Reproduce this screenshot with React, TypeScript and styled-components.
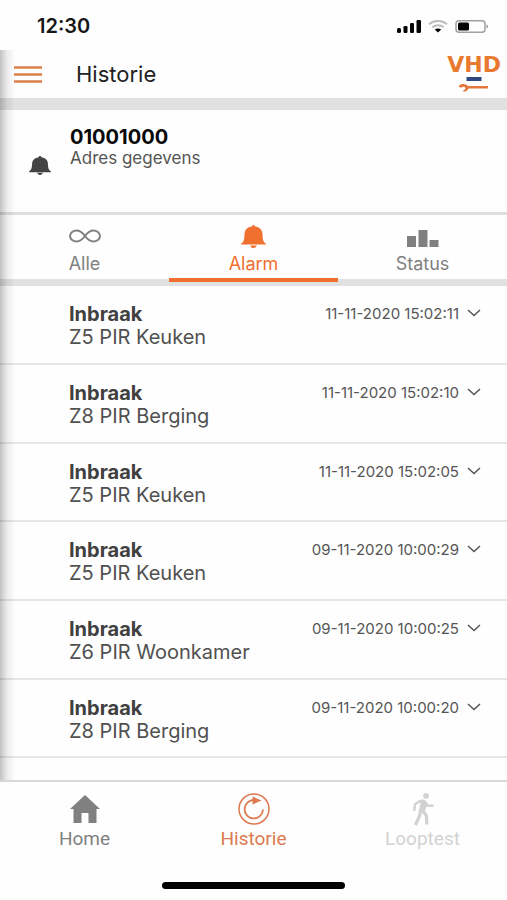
import React from "react";
import styled, { createGlobalStyle } from "styled-components";

const ORANGE = "#f07030";

const GlobalStyle = createGlobalStyle`
  * { box-sizing: border-box; }
  body { margin: 0; background: #fefefe; font-family: Inter, "Liberation Sans", sans-serif; color: #444; }
  button { font: inherit; color: inherit; background: none; border: 0; padding: 0; cursor: pointer; }
  svg { display: block; }
`;

const Screen = styled.div`
  display: flex;
  flex-direction: column;
  height: 100vh;
  overflow: hidden;
`;

const StatusBar = styled.div`
  display: flex;
  flex: none;
  align-items: center;
  justify-content: space-between;
  height: 50px;
  padding: 2px 18px 0 37px;
`;

const Clock = styled.span`
  font-size: 20px;
  line-height: 24px;
  font-weight: 600;
  color: #161616;
`;

const Indicators = styled.div`
  display: flex;
  align-items: center;
  gap: 7px;
`;

const Page = styled.div`
  position: relative;
  display: flex;
  flex-direction: column;
  flex: 1;
  min-height: 0;
`;

const EdgeShadow = styled.div`
  position: absolute;
  inset: 0 auto 0 0;
  width: 15px;
  background: linear-gradient(to right, rgba(0, 0, 0, 0.24), rgba(0, 0, 0, 0.08) 45%, transparent);
  pointer-events: none;
`;

const Header = styled.header`
  display: flex;
  flex: none;
  align-items: center;
  height: 60px;
  padding: 0 6px 0 14px;
  border-bottom: 12px solid #e1e1e1;
`;

const MenuButton = styled.button`
  width: 62px;
`;

const Title = styled.h1`
  flex: 1;
  margin: 0;
  font-size: 22px;
  line-height: 24px;
  font-weight: 400;
  color: #222;
`;

const Account = styled.section`
  display: flex;
  flex: none;
  height: 105px;
  padding: 16px 16px 0 29px;
  border-bottom: 3px solid #dedede;
`;

const AccountIcon = styled.div`
  width: 41px;
  padding-top: 30px;
`;

const AccountNumber = styled.h2`
  margin: 0;
  font-size: 20px;
  line-height: 22px;
  font-weight: 700;
  color: #080808;
`;

const Address = styled.p`
  margin: 0;
  font-size: 17px;
  line-height: 20px;
  color: #555;
`;

const Tabs = styled.div`
  display: grid;
  flex: none;
  grid-template-columns: repeat(3, 1fr);
  height: 71px;
  background: linear-gradient(#e1e1e1, #e1e1e1) bottom / 100% 7px no-repeat;
`;

const Tab = styled.button<{ $active?: boolean }>`
  display: flex;
  flex-direction: column;
  align-items: center;
  gap: 5px;
  padding-top: 8px;
  font-size: 18px;
  line-height: 20px;
  color: ${(p) => (p.$active ? ORANGE : "#808080")};
  background: ${(p) => (p.$active ? `linear-gradient(${ORANGE}, ${ORANGE}) 0 63px / 100% 4px no-repeat` : "none")};
`;

const TabIcon = styled.span`
  display: flex;
  align-items: center;
  height: 26px;
`;

const Events = styled.ul`
  flex: 1;
  min-height: 0;
  margin: 0;
  padding: 0;
  overflow: hidden;
  list-style: none;
`;

const EventRow = styled.li`
  display: flex;
  justify-content: space-between;
  height: 79px;
  padding: 17px 26px 0 69px;
  border-bottom: 2px solid #e6e6e6;

  &:nth-child(3n) { height: 78px; }
`;

const EventName = styled.h3`
  margin: 0;
  font-size: 20px;
  line-height: 22px;
  font-weight: 700;
  color: #404040;
`;

const Zone = styled.p`
  margin: 0;
  font-size: 20px;
  line-height: 24px;
  color: #505050;
`;

const Expand = styled.button`
  display: flex;
  align-items: center;
  gap: 8px;
  height: 20px;
  font-size: 15px;
  color: #555;
`;

const BottomNav = styled.nav`
  display: grid;
  flex: none;
  grid-template-columns: repeat(3, 1fr);
  height: 94px;
  border-top: 2px solid #d8d8d8;
`;

const NavItem = styled.button<{ $color: string }>`
  display: flex;
  flex-direction: column;
  align-items: center;
  align-self: start;
  gap: 1px;
  padding-top: 10px;
  font-family: Roboto, "Liberation Sans", sans-serif;
  font-size: 19px;
  line-height: 24px;
  color: ${(p) => p.$color};
`;

const HomeArea = styled.div`
  display: flex;
  flex: none;
  justify-content: center;
  height: 26px;
  padding-top: 8px;
`;

const HomeIndicator = styled.div`
  width: 36%;
  height: 7px;
  border-radius: 4px;
  background: #000;
`;

const Bell = ({ width, height }: { width: number; height: number }) => (
  <svg width={width} height={height} viewBox="0 0 24 22" preserveAspectRatio="none" fill="currentColor" aria-hidden="true">
    <path d="M10.500 1.500a1.500 1.500 0 0 1 3 0c4.300.5 6.800 3 7.100 7 .2 4.600.4 7.800 3.400 9.400v.8H0v-.8c3-1.600 3.200-4.800 3.400-9.400.3-4 2.800-6.500 7.100-7zM9 19.500h6c-.3 1.600-1.400 2.500-3 2.500s-2.700-.9-3-2.500z" />
  </svg>
);

const SignalIcons = () => (
  <Indicators>
    <svg width="24" height="13" viewBox="0 0 24 13" fill="#050505" aria-hidden="true">
      <rect x="0" y="8" width="4" height="5" rx="1.500" />
      <rect x="6.500" y="6" width="4" height="7" rx="1.200" />
      <rect x="13" y="3" width="4" height="10" rx="1.200" />
      <rect x="19.500" y="0" width="4.500" height="13" rx="1.200" />
    </svg>
    <svg width="20" height="13" viewBox="0 0 20 13" fill="none" aria-hidden="true">
      <path d="M1 4.200c5-4.200 13-4.200 18 0M4.300 7.300c3.200-2.700 8.200-2.700 11.400 0" stroke="#bdbdbd" strokeWidth="2" />
      <path d="M6.800 9.500c1.800-1.300 4.600-1.300 6.400 0L10 12.500z" fill="#050505" />
    </svg>
    <svg width="34" height="13" viewBox="0 0 34 13" aria-hidden="true">
      <rect x="1" y=".75" width="29" height="11.500" rx="3" fill="none" stroke="#a0a0a0" strokeWidth="1.500" />
      <rect x="3" y="2.500" width="11" height="8" rx="1.500" fill="#050505" />
      <path d="M31.500 4.500c2 .5 2 3.500 0 4z" fill="#999" />
    </svg>
  </Indicators>
);

const LogoLink = styled.a`
  display: flex;
  flex-direction: column;
  align-items: center;
  font-family: "DejaVu Sans", sans-serif;
  font-size: 22px;
  line-height: 20px;
  font-weight: 700;
  color: #e87a30;
  text-decoration: none;
`;

const Logo = () => (
  <LogoLink href="#" aria-label="VHD">
    VHD
    <svg width="30" height="18" viewBox="0 0 30 18" aria-hidden="true">
      <path d="M7.500 2h15v4h-15z" fill="#304880" />
      <path d="M0 10.800C1.800 8.300 7 8.300 9 11h20v2.500H9.500c-.8 2-2.500 3.300-5 3.200l-.3-1.500c1.500-.2 2.300-1 2.200-2.300C6 11.300 3.800 11.300 2.800 12.600L0 12.300z" fill="#e5773d" />
    </svg>
  </LogoLink>
);

const Infinity = () => (
  <svg width="32" height="14" viewBox="0 0 32 14" fill="none" stroke="currentColor" strokeWidth="2" aria-hidden="true">
    <path d="M16 7c-3-4-5.500-5.500-8.500-5.500S1 3.800 1 7s3.500 5.500 6.500 5.500S13 11 16 7s5.500-5.500 8.500-5.500S31 3.800 31 7s-3.500 5.500-6.500 5.500S19 11 16 7z" />
  </svg>
);

const Bars = () => (
  <svg width="32" height="22" viewBox="0 0 32 22" fill="currentColor" aria-hidden="true">
    <path d="M0 11h9v11H0zM11.500 5h9v17h-9zM22.500 15h9v7h-9z" />
  </svg>
);

const House = () => (
  <svg width="32" height="34" viewBox="0 0 32 34" fill="currentColor" aria-hidden="true">
    <path d="M16 3 31 17h-3.500v14h-8V21h-7v10h-8V17H1z" />
  </svg>
);

const History = () => (
  <svg width="34" height="34" viewBox="0 0 34 34" fill="none" stroke="currentColor" aria-hidden="true">
    <circle cx="17" cy="17" r="15" strokeWidth="1.500" />
    <path d="M17 8a9.200 9.200 0 1 0 9 9.500" strokeWidth="1.800" />
    <path d="M15.500 4.500 24.500 8.500l-9 4z" fill="currentColor" stroke="none" />
  </svg>
);

const Walker = () => (
  <svg width="24" height="34" viewBox="0 0 24 34" fill="none" stroke="currentColor" aria-hidden="true">
    <circle cx="15" cy="3.800" r="2.900" fill="currentColor" stroke="none" />
    <path d="M7 8.500c2-1 4.500-1.300 6.500-.8L16 13l-2.500 7.500H7.500L9.500 11z" fill="currentColor" stroke="none" />
    <path d="M9.500 9 4 12.200 3.200 19M13.500 9l3 4.700h6" strokeWidth="2.400" strokeLinejoin="round" />
    <path d="M9.500 18.500 8.500 24 4.500 33M12 19l3.500 5 .3 8.500" strokeWidth="3.200" strokeLinejoin="round" />
  </svg>
);

const Chevron = () => (
  <svg width="14" height="8" viewBox="0 0 14 8" fill="none" stroke="currentColor" strokeWidth="1.500" aria-hidden="true">
    <path d="m1 1 6 5.500 6-5.500" />
  </svg>
);

const events = [
  { zone: "Z5 PIR Keuken", time: "11-11-2020 15:02:11" },
  { zone: "Z8 PIR Berging", time: "11-11-2020 15:02:10" },
  { zone: "Z5 PIR Keuken", time: "11-11-2020 15:02:05" },
  { zone: "Z5 PIR Keuken", time: "09-11-2020 10:00:29" },
  { zone: "Z6 PIR Woonkamer", time: "09-11-2020 10:00:25" },
  { zone: "Z8 PIR Berging", time: "09-11-2020 10:00:20" },
];

export default function App() {
  return (
    <Screen>
      <GlobalStyle />
      <StatusBar>
        <Clock>12:30</Clock>
        <SignalIcons />
      </StatusBar>
      <Page>
        <Header>
          <MenuButton aria-label="Menu">
            <svg width="28" height="17" viewBox="0 0 28 17" stroke="#db804d" strokeWidth="2.300" aria-hidden="true">
              <path d="M0 1.500h28M0 8.500h28M0 15.500h28" />
            </svg>
          </MenuButton>
          <Title>Historie</Title>
          <Logo />
        </Header>
        <Account>
          <AccountIcon><Bell width={22} height={19} /></AccountIcon>
          <div>
            <AccountNumber>01001000</AccountNumber>
            <Address>Adres gegevens</Address>
          </div>
        </Account>
        <Tabs role="tablist">
          <Tab role="tab" aria-selected={false}><TabIcon><Infinity /></TabIcon>Alle</Tab>
          <Tab role="tab" aria-selected $active><TabIcon><Bell width={25} height={23} /></TabIcon>Alarm</Tab>
          <Tab role="tab" aria-selected={false}><TabIcon><Bars /></TabIcon>Status</Tab>
        </Tabs>
        <Events>
          {events.map((event) => (
            <EventRow key={event.time}>
              <div>
                <EventName>Inbraak</EventName>
                <Zone>{event.zone}</Zone>
              </div>
              <Expand>{event.time}<Chevron /></Expand>
            </EventRow>
          ))}
        </Events>
        <EdgeShadow />
      </Page>
      <BottomNav>
        <NavItem $color="#808080"><House />Home</NavItem>
        <NavItem $color="#dc7950" aria-current="page"><History />Historie</NavItem>
        <NavItem $color="#d2d2d2" disabled><Walker />Looptest</NavItem>
      </BottomNav>
      <HomeArea><HomeIndicator /></HomeArea>
    </Screen>
  );
}
